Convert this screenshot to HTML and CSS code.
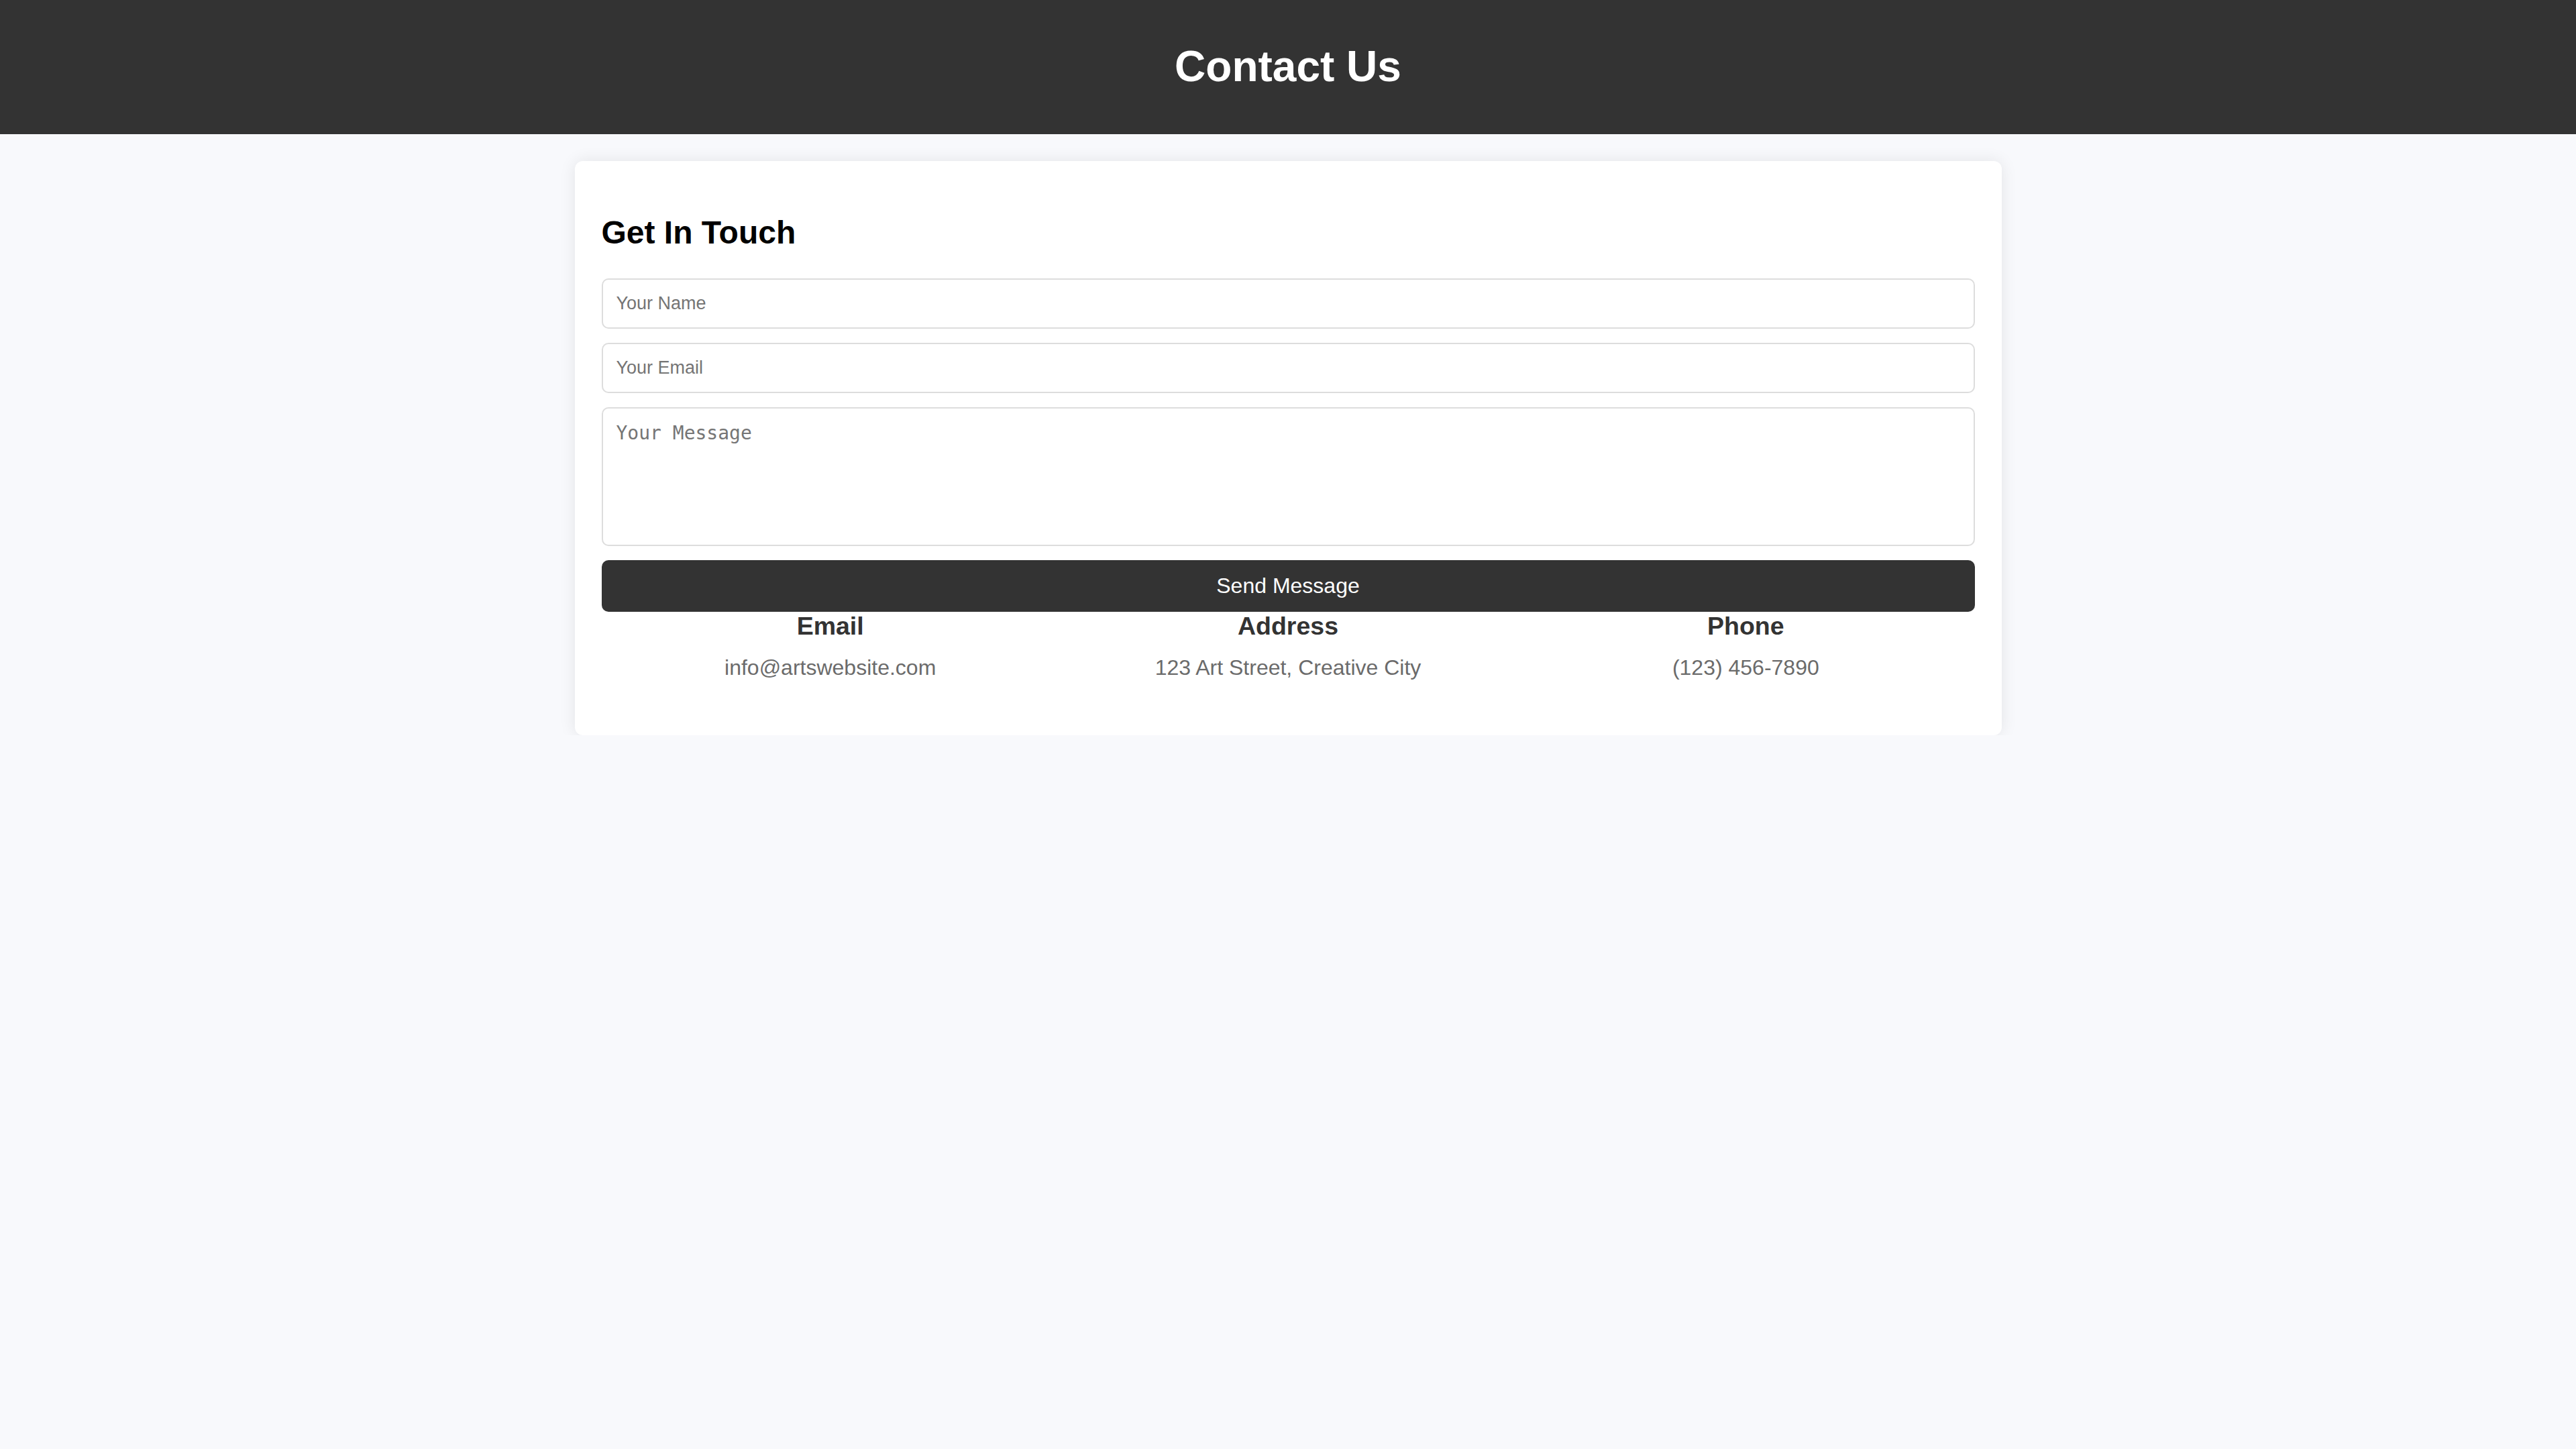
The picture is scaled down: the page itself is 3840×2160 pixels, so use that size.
FILE: index.html
```html
<!DOCTYPE html>
<html lang="en">
<head>
<meta charset="utf-8">
<title>Contact Us</title>
<link rel="stylesheet" href="styles.css">
</head>
<body>
<header class="site-header">
  <h1 class="site-title">Contact Us</h1>
</header>
<main class="card">
  <h2 class="card-title">Get In Touch</h2>
  <form class="contact-form">
    <input class="field" type="text" placeholder="Your Name">
    <input class="field" type="email" placeholder="Your Email">
    <textarea class="field field-area" placeholder="Your Message"></textarea>
    <button class="send-btn" type="button">Send Message</button>
  </form>
  <section class="info-grid">
    <div class="info-item">
      <h3 class="info-title">Email</h3>
      <p class="info-text">info@artswebsite.com</p>
    </div>
    <div class="info-item">
      <h3 class="info-title">Address</h3>
      <p class="info-text">123 Art Street, Creative City</p>
    </div>
    <div class="info-item">
      <h3 class="info-title">Phone</h3>
      <p class="info-text">(123) 456-7890</p>
    </div>
  </section>
</main>
</body>
</html>
```
FILE: styles.css
```css
* { box-sizing: border-box; }

body {
  margin: 0;
  background: #f8f9fc;
  font-family: "Liberation Sans", Arial, sans-serif;
}

.site-header {
  background: #333333;
  height: 200px;
  display: flex;
  align-items: center;
  justify-content: center;
}

.site-title {
  margin: 0;
  color: #ffffff;
  font-size: 64px;
  font-weight: 700;
  line-height: 1.15;
}

.card {
  width: 2127px;
  margin: 40px auto 0;
  background: #ffffff;
  border-radius: 12px;
  box-shadow: 0 0 25px rgba(0, 0, 0, 0.09);
  padding: 40px;
}

.card-title {
  margin: 39px 0 41px;
  font-size: 48px;
  font-weight: 700;
  color: #000000;
  line-height: 1.15;
}

.contact-form {
  display: flex;
  flex-direction: column;
  gap: 21px;
}

.field {
  display: block;
  width: 100%;
  height: 75px;
  border: 2px solid #dddddd;
  border-radius: 10px;
  padding: 0 20px;
  font-family: "Liberation Sans", Arial, sans-serif;
  font-size: 27px;
  color: #333;
  background: #fff;
  outline: none;
}

.field::placeholder { color: #757575; }

.field-area {
  height: 207px;
  padding: 20px 20px;
  font-family: "DejaVu Sans Mono", monospace;
  font-size: 28px;
  resize: none;
}

.send-btn {
  display: block;
  width: 100%;
  height: 77px;
  border: none;
  border-radius: 10px;
  background: #333333;
  color: #ffffff;
  font-family: "Liberation Sans", Arial, sans-serif;
  font-size: 32px;
  cursor: pointer;
}

.info-grid {
  display: grid;
  grid-template-columns: 1fr 1fr 1fr;
  text-align: center;
  margin-bottom: 42px;
}

.info-title {
  margin: 0;
  font-size: 37.5px;
  font-weight: 700;
  color: #333333;
  line-height: 1.15;
}

.info-text {
  margin: 22px 0 0;
  font-size: 32px;
  color: #6b6b6b;
  line-height: 1.15;
}
```
